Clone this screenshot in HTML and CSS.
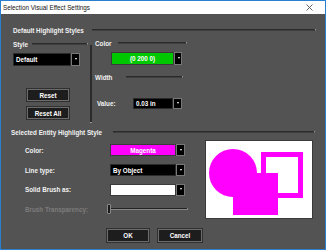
FILE: index.html
```html
<!DOCTYPE html>
<html>
<head>
<meta charset="utf-8">
<link rel="stylesheet" href="styles.css">
</head>
<body>
<div class="window">
  <div class="titlebar">
    <span>Selection Visual Effect Settings</span>
    <svg class="close" viewBox="0 0 7 7" width="7" height="7"><path d="M0.5 0.5L6.5 6.5M6.5 0.5L0.5 6.5" stroke="#555" stroke-width="0.9"/></svg>
  </div>
  <div class="content">
    <div class="sec-head"><span class="lbl w1">Default Highlight Styles</span><span class="groove"></span></div>
    <div class="top">
      <div class="style-col">
        <div class="sub-head"><span class="lbl w-style">Style</span><span class="groove"></span></div>
        <div class="dropdown dd-style"><span class="dd-text">Default</span><span class="dd-arrow"></span></div>
        <div class="btn btn-reset">Reset</div>
        <div class="btn btn-resetall">Reset All</div>
      </div>
      <div class="vsep"></div>
      <div class="color-col">
        <div class="sub-head"><span class="lbl w-color">Color</span><span class="groove"></span></div>
        <div class="dropdown dd-green"><span class="dd-text center">(0 200 0)</span><span class="dd-arrow"></span></div>
        <div class="sub-head width-head"><span class="lbl w-width">Width</span><span class="groove"></span></div>
        <div class="value-row"><span class="lbl w-value">Value:</span>
          <div class="dropdown dd-value"><span class="dd-text">0.03 in</span><span class="dd-arrow"></span></div>
        </div>
      </div>
    </div>
    <div class="sec-head sec2"><span class="lbl w2">Selected Entity Highlight Style</span><span class="groove"></span></div>
    <div class="entity">
      <div class="row-lbl">Color:</div>
      <div class="row-ctl"><div class="dropdown dd-wide dd-magenta"><span class="dd-text center">Magenta</span><span class="dd-arrow"></span></div></div>
      <div class="preview">
        <svg viewBox="0 0 106 78" width="106" height="78">
          <circle cx="27" cy="32" r="24" fill="#ff00ff"/>
          <rect x="57.5" y="13.5" width="37" height="41" fill="none" stroke="#ff00ff" stroke-width="5"/>
          <rect x="27" y="32" width="45" height="42" fill="#ff00ff"/>
        </svg>
      </div>
      <div class="row-lbl">Line type:</div>
      <div class="row-ctl"><div class="dropdown dd-wide"><span class="dd-text">By Object</span><span class="dd-arrow"></span></div></div>
      <div class="row-lbl">Solid Brush as:</div>
      <div class="row-ctl"><div class="dropdown dd-wide dd-white"><span class="dd-text"></span><span class="dd-arrow"></span></div></div>
      <div class="row-lbl disabled">Brush Transparency:</div>
      <div class="row-ctl"><div class="slider"><span class="thumb"></span><span class="track"></span></div></div>
    </div>
    <div class="buttons">
      <div class="btn btn-ok">OK</div>
      <div class="btn btn-cancel">Cancel</div>
    </div>
  </div>
</div>
</body>
</html>
```

FILE: styles.css
```css
* { box-sizing: border-box; margin: 0; padding: 0; }
html, body { width: 326px; height: 250px; overflow: hidden; background: #535353; }
body { font-family: "Liberation Sans", Arial, sans-serif; font-size: 6.3px; color: #f2f2f2; }

.window { width: 326px; height: 250px; border: 1px solid #2a7fd0; background: #535353; display: flex; flex-direction: column; }
.titlebar { height: 13px; flex: none; background: #fff; color: #111; display: flex; align-items: center; justify-content: space-between; padding: 0 12px 0 2px; }
.close { display: block; }

.content { flex: 1; padding: 11px 9px 0 12px; font-weight: bold; }

.sec-head, .sub-head { height: 10px; display: flex; align-items: center; }
.lbl { flex: none; white-space: nowrap; }
.groove { flex: 1; height: 2px; background: #2b2b2b; border-bottom: 1px solid #3f3f3f; border-right: 1px solid #9a9a9a; }

.w1 { width: 79px; }
.top { display: flex; margin-top: 4px; height: 84px; }
.style-col { width: 75px; flex: none; }
.w-style { width: 19px; }
.vsep { width: 2px; margin-left: 2px; margin-top: 6px; height: 78px; background: #2b2b2b; border-bottom: 1px solid #9a9a9a; flex: none; }
.color-col { width: 92px; margin-left: 3px; margin-top: -1px; flex: none; }
.w-color { width: 23px; }
.w-width { width: 31px; }
.width-head { margin-top: 7px; margin-right: 4px; }
.value-row { margin-top: 16px; height: 11px; display: flex; align-items: center; }
.w-value { width: 38px; padding-left: 2px; }

.dropdown { display: flex; height: 13px; background: #000; }
.dd-text { flex: 1; display: flex; align-items: center; padding-left: 2px; color: #fff; border: 1px solid #2a2a2a; }
.dd-text.center { justify-content: center; padding-left: 0; }
.dd-arrow { width: 9px; flex: none; background: #000; border: 1px solid #777; position: relative; }
.dd-arrow::after { content: ""; position: absolute; left: 2.5px; top: 4px; width: 0; height: 0; border-left: 1.5px solid transparent; border-right: 1.5px solid transparent; border-top: 2px solid #fff; }

.dd-style { width: 67px; margin-top: 4px; }
.dd-green { width: 71px; margin-left: 16px; margin-top: 4px; }
.dd-green .dd-text { background: #00c800; border-color: #3a3a3a; }
.dd-green .dd-arrow { width: 8px; }
.dd-value { width: 49px; height: 11px; }
.dd-value .dd-arrow::after { top: 3px; }

.btn { height: 12px; display: flex; align-items: center; justify-content: center; background: #1d1d1d; border: 1px solid #6c6c6c; outline: 1px solid #303030; color: #fff; }
.btn-reset { width: 42px; margin-left: 14px; margin-top: 23px; }
.btn-resetall { width: 42px; margin-left: 14px; margin-top: 6px; }

.sec2 { margin-top: 4px; margin-left: -2px; }
.w2 { width: 102px; }
.sec2 .groove { margin-right: 1px; }

.entity { display: grid; grid-template-columns: 85px 95px 108px; grid-template-rows: 20px 20px 19px 20px; margin-top: 3px; margin-left: 12px; }
.row-lbl { display: flex; align-items: center; }
.row-lbl.disabled { color: #7c7c7c; }
.row-ctl { display: flex; align-items: center; }
.preview { grid-column: 3; grid-row: 1 / 5; background: #fff; border: 1px solid #3a3a3a; }
.preview svg { display: block; }

.dd-wide { width: 75px; height: 12px; }
.dd-wide .dd-arrow::after { top: 3.5px; }
.dd-magenta .dd-text { background: #ff00ff; border-color: #3a3a3a; }
.dd-white .dd-text { background: #fff; border-color: #3a3a3a; }

.slider { width: 81px; height: 10px; margin-left: -3px; display: flex; align-items: center; }
.thumb { width: 4px; height: 10px; background: #1a1a1a; border: 1px solid #8a8a8a; border-radius: 1px; flex: none; }
.track { flex: 1; height: 2px; background: #222; border-bottom: 1px solid #888; border-right: 1px solid #888; }

.buttons { display: flex; margin-top: 10px; }
.btn-ok { width: 42px; height: 13px; margin-left: 94px; }
.btn-cancel { width: 44px; height: 13px; margin-left: 9px; }
```
